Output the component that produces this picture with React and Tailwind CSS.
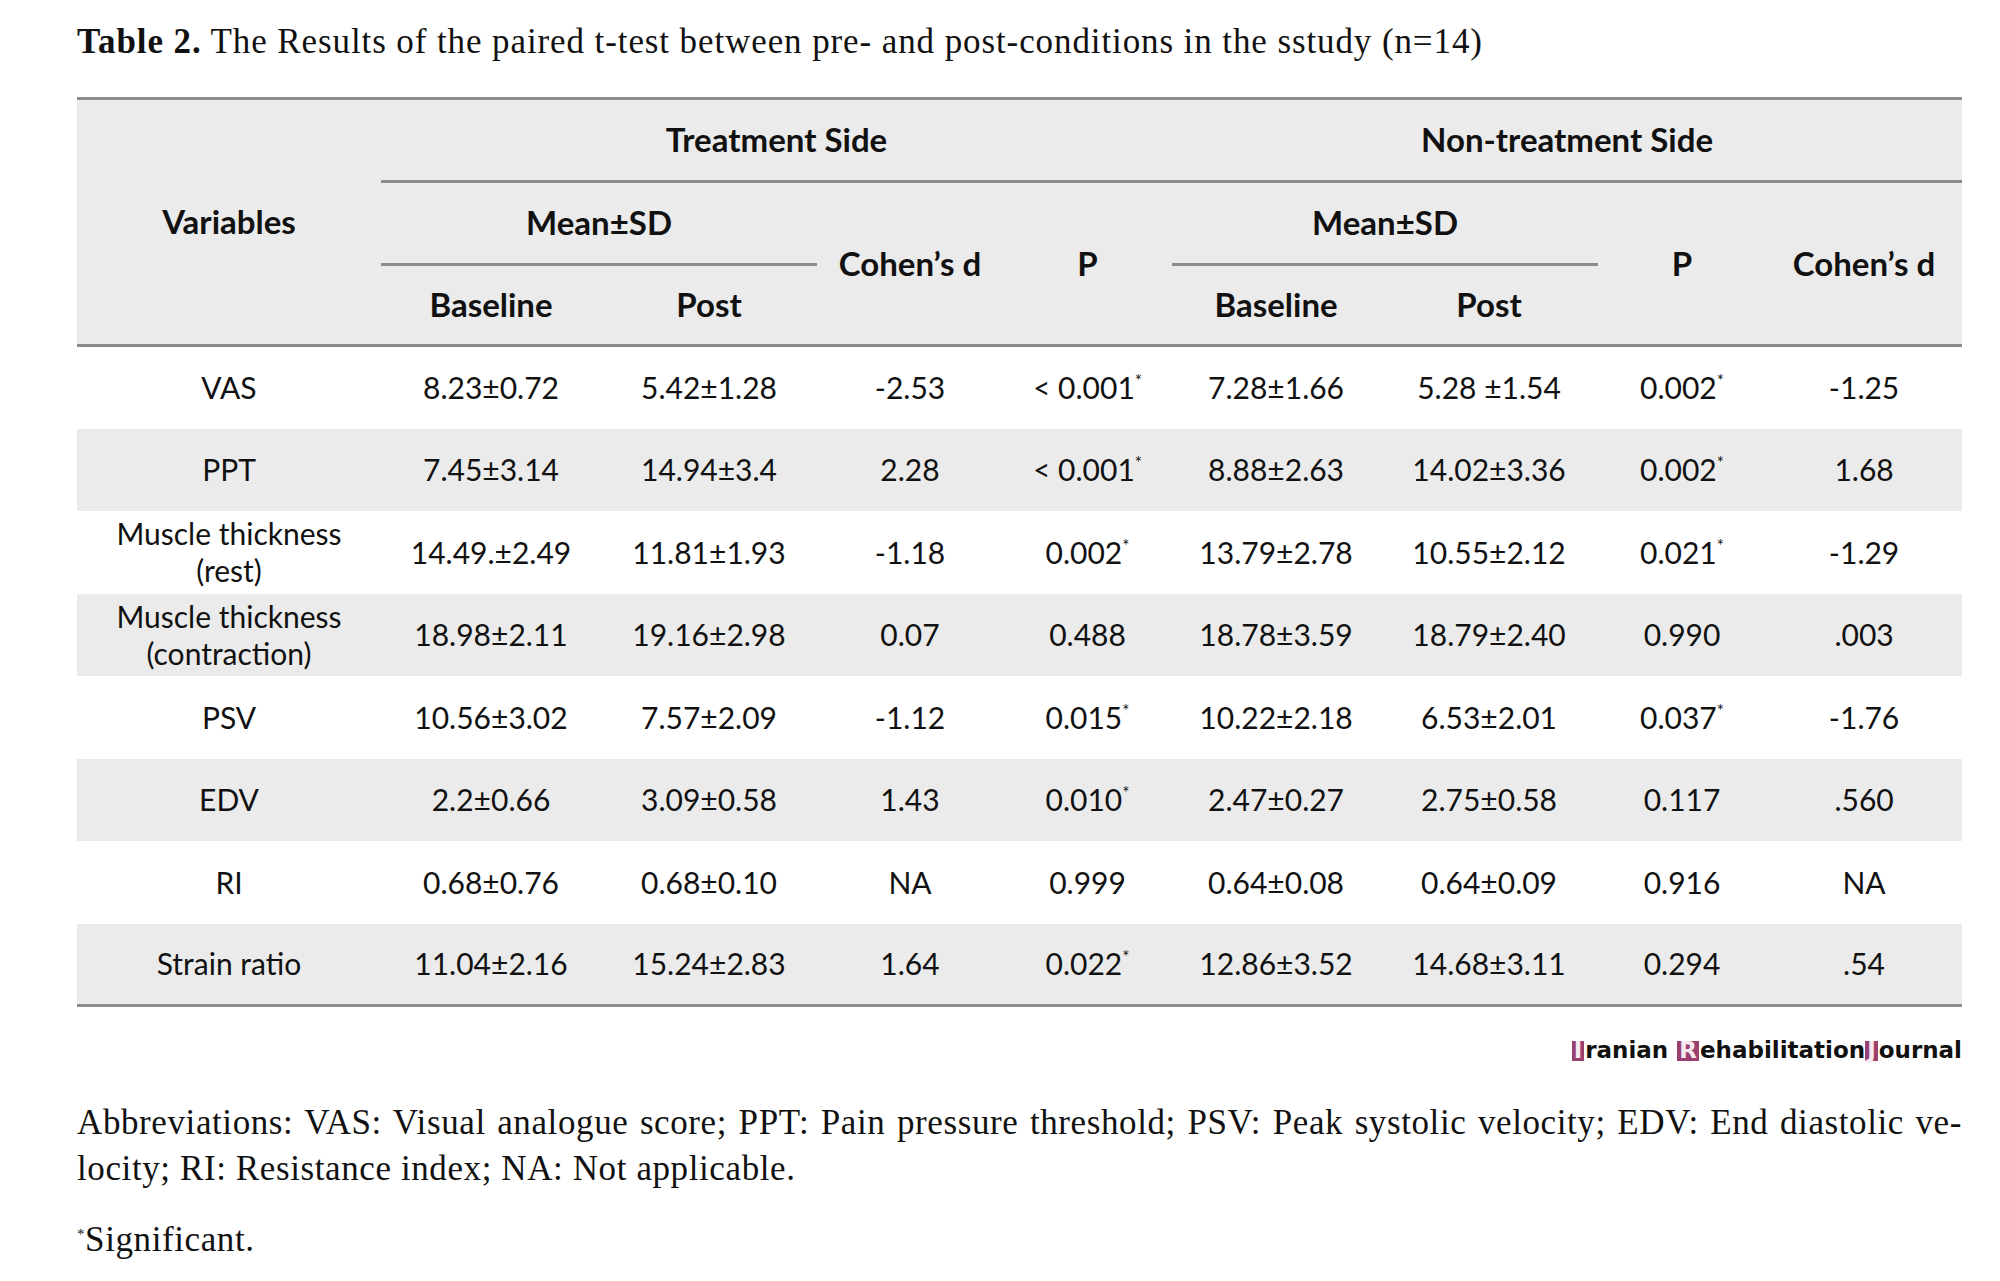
import React from "react";

const cols = [304, 220, 216, 186, 169, 208, 218, 168, 196];

// values: [label, tBase, tPost, tD, tP, tPsig, nBase, nPost, nP, nPsig, nD]
const rows = [
  [["VAS"], "8.23±0.72", "5.42±1.28", "-2.53", "< 0.001", true, "7.28±1.66", "5.28 ±1.54", "0.002", true, "-1.25"],
  [["PPT"], "7.45±3.14", "14.94±3.4", "2.28", "< 0.001", true, "8.88±2.63", "14.02±3.36", "0.002", true, "1.68"],
  [["Muscle thickness", "(rest)"], "14.49.±2.49", "11.81±1.93", "-1.18", "0.002", true, "13.79±2.78", "10.55±2.12", "0.021", true, "-1.29"],
  [["Muscle thickness", "(contraction)"], "18.98±2.11", "19.16±2.98", "0.07", "0.488", false, "18.78±3.59", "18.79±2.40", "0.990", false, ".003"],
  [["PSV"], "10.56±3.02", "7.57±2.09", "-1.12", "0.015", true, "10.22±2.18", "6.53±2.01", "0.037", true, "-1.76"],
  [["EDV"], "2.2±0.66", "3.09±0.58", "1.43", "0.010", true, "2.47±0.27", "2.75±0.58", "0.117", false, ".560"],
  [["RI"], "0.68±0.76", "0.68±0.10", "NA", "0.999", false, "0.64±0.08", "0.64±0.09", "0.916", false, "NA"],
  [["Strain ratio"], "11.04±2.16", "15.24±2.83", "1.64", "0.022", true, "12.86±3.52", "14.68±3.11", "0.294", false, ".54"],
];

const Star = () => (
  <span className="relative -top-[12px] text-[17px] leading-none">*</span>
);

const PVal = ({ v, sig }) => (
  <span>
    {v}
    {sig && <Star />}
  </span>
);

const Box = ({ ch }) => (
  <span className="inline-flex items-center justify-center bg-[#9b3f6f] text-[#f6e8f0] h-[20px] px-[2px] mr-[1px] leading-none">
    {ch}
  </span>
);

const Logo = () => (
  <div className="flex items-center font-['DejaVu_Sans',sans-serif] font-bold text-[23px] text-[#111] leading-none">
    <Box ch="I" />
    <span className="mr-[9px]">ranian</span>
    <Box ch="R" />
    <span>ehabilitation</span>
    <Box ch="J" />
    <span>ournal</span>
  </div>
);

export default function App() {
  const th = "font-bold text-center align-middle";
  const line = "border-[#8c8c8c]";
  return (
    <div className="w-[2000px] h-[1281px] bg-white text-[#111] pl-[77px] pt-[20px]">
      <h1 className="font-['Liberation_Serif',serif] text-[35px] leading-[44px] tracking-[0.9px] whitespace-nowrap">
        <span className="font-bold">Table 2.</span> The Results of the paired t-test between pre- and post-conditions in the sstudy (n=14)
      </h1>

      <table className="mt-[33px] w-[1885px] table-fixed border-collapse font-['Lato',sans-serif] text-[30px]">
        <colgroup>
          {cols.map((w, i) => (
            <col key={i} style={{ width: w }} />
          ))}
        </colgroup>
        <thead className="bg-[#ebebeb] text-[33px]">
          <tr className={`h-[83px] border-t-[3px] ${line}`}>
            <th rowSpan={3} className={`${th} border-b-[3px] ${line}`}>Variables</th>
            <th colSpan={4} className={`${th} border-b-[3px] ${line}`}>Treatment Side</th>
            <th colSpan={4} className={`${th} border-b-[3px] ${line}`}>Non-treatment Side</th>
          </tr>
          <tr className="h-[83px]">
            <th colSpan={2} className={`${th} border-b-[3px] ${line}`}>Mean±SD</th>
            <th rowSpan={2} className={`${th} border-b-[3px] ${line}`}>Cohen’s d</th>
            <th rowSpan={2} className={`${th} border-b-[3px] ${line}`}>P</th>
            <th colSpan={2} className={`${th} border-b-[3px] ${line}`}>Mean±SD</th>
            <th rowSpan={2} className={`${th} border-b-[3px] ${line}`}>P</th>
            <th rowSpan={2} className={`${th} border-b-[3px] ${line}`}>Cohen’s d</th>
          </tr>
          <tr className="h-[81px]">
            <th className={`${th} border-b-[3px] ${line}`}>Baseline</th>
            <th className={`${th} border-b-[3px] ${line}`}>Post</th>
            <th className={`${th} border-b-[3px] ${line}`}>Baseline</th>
            <th className={`${th} border-b-[3px] ${line}`}>Post</th>
          </tr>
        </thead>
        <tbody>
          {rows.map((r, i) => (
            <tr
              key={i}
              className={`${i % 2 ? "h-[82px] bg-[#ebebeb]" : "h-[83px] bg-white"} ${
                i === rows.length - 1 ? `border-b-[3px] ${line}` : ""
              }`}
            >
              <td className="text-center align-middle leading-[37px]">
                {r[0].map((t, k) => (
                  <div key={k}>{t}</div>
                ))}
              </td>
              <td className="text-center">{r[1]}</td>
              <td className="text-center">{r[2]}</td>
              <td className="text-center">{r[3]}</td>
              <td className="text-center">
                <PVal v={r[4]} sig={r[5]} />
              </td>
              <td className="text-center">{r[6]}</td>
              <td className="text-center">{r[7]}</td>
              <td className="text-center">
                <PVal v={r[8]} sig={r[9]} />
              </td>
              <td className="text-center">{r[10]}</td>
            </tr>
          ))}
        </tbody>
      </table>

      <div className="w-[1885px] flex justify-end mt-[32px]">
        <Logo />
      </div>

      <div className="w-[1885px] mt-[38px] font-['Liberation_Serif',serif] text-[35px] leading-[46px] tracking-[0.6px]">
        <div className="text-justify [text-align-last:justify]">
          Abbreviations: VAS: Visual analogue score; PPT: Pain pressure threshold; PSV: Peak systolic velocity; EDV: End diastolic ve-
        </div>
        <div>locity; RI: Resistance index; NA: Not applicable.</div>
        <div className="mt-[25px]">
          <span className="relative -top-[12px] text-[15px]">*</span>Significant.
        </div>
      </div>
    </div>
  );
}
